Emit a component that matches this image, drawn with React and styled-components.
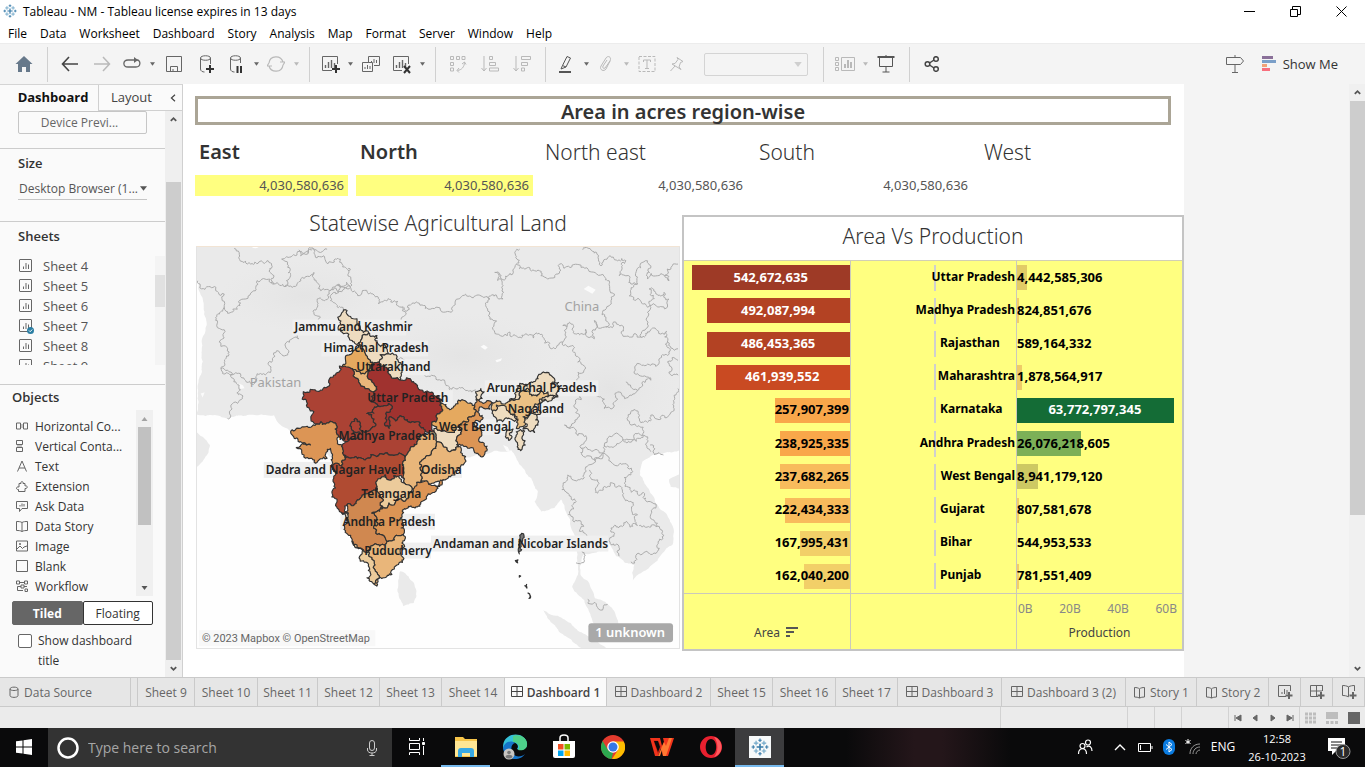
import React from "react";
import styled, { createGlobalStyle, css } from "styled-components";

const ui = '"Open Sans", "Noto Sans", sans-serif';
const viz = '"Noto Sans", "Open Sans", sans-serif';

const Global = createGlobalStyle`
  * { box-sizing: border-box; }
  html, body { margin: 0; padding: 0; }
  body { font-family: ${ui}; font-size: 12px; color: #333; background: #fff; }
  button, input, select { font-family: inherit; font-size: inherit; color: inherit; }
  button { border: 0; padding: 0; background: none; }
  h1, h2, p, ul { margin: 0; padding: 0; list-style: none; }
`;

/* ---------- shell ---------- */
const Shell = styled.div`
  display: flex;
  flex-direction: column;
  min-height: 100vh;
  overflow: hidden;
`;
const TitleBar = styled.header`
  display: flex;
  align-items: center;
  height: 22px;
  padding: 0 16px 0 3px;
  gap: 6px;
  color: #000;
  white-space: nowrap;
`;
const WindowControls = styled.div`
  display: flex;
  margin-left: auto;
  gap: 30px;
`;
const WindowButton = styled.button`
  display: grid;
  place-items: center;
  width: 16px;
  height: 16px;
`;
const MenuBar = styled.nav`
  display: flex;
  align-items: center;
  height: 21px;
  padding: 2px 0 0 8px;
  gap: 13px;
  color: #000;
`;
const ToolBar = styled.div`
  display: flex;
  align-items: center;
  height: 41px;
  background: #f4f4f4;
  border-top: 1px solid #ececec;
`;
const ToolButton = styled.button`
  display: grid;
  place-items: center;
  flex: none;
  width: ${(p) => p.$w || 32}px;
  height: 34px;
  color: ${(p) => (p.$off ? "#b9b9b9" : "#666")};
`;
const ToolRule = styled.div`
  flex: none;
  width: 1px;
  height: 35px;
  margin: 0 6px 0 ${(p) => (p.$flush ? 0 : 7)}px;
  background: #d0d0d0;
`;
const MarkSelect = styled.select`
  appearance: none;
  width: 104px;
  height: 23px;
  margin: 0 8px 0 12px;
  border: 1px solid #d4d4d4;
  border-radius: 2px;
  background: #f4f4f4;
`;
const SelectWrap = styled.label`
  display: grid;
  align-items: center;
  & > * { grid-area: 1 / 1; }
  & > svg { justify-self: end; margin-right: ${(p) => p.$inset}px; pointer-events: none; }
`;
const ShowMe = styled.button`
  display: flex;
  align-items: center;
  gap: 6px;
  margin: 0 27px 0 11px;
  font-size: 13px;
  color: #333;
`;
const Push = styled.div`
  margin-left: auto;
  display: flex;
  align-items: center;
`;

/* ---------- side pane ---------- */
const Work = styled.div`
  display: flex;
  flex: 1;
`;
const Side = styled.aside`
  display: flex;
  flex-direction: column;
  flex: none;
  width: 183px;
  background: #fafafa;
  border-top: 1px solid #d4d4d4;
  border-right: 1px solid #d0d0d0;
`;
const SideTabs = styled.div`
  display: flex;
  height: 26px;
  font-size: 13px;
`;
const SideTab = styled.button`
  width: ${(p) => p.$w}px;
  padding: 0 0 2px ${(p) => (p.$on ? 8 : 2)}px;
  font-weight: ${(p) => (p.$on ? 700 : 400)};
  color: ${(p) => (p.$on ? "#111" : "#444")};
  ${(p) => !p.$on && css`border-bottom: 1px solid #d0d0d0;`}
  ${(p) => p.$edge && css`border-left: 1px solid #d0d0d0;`}
`;
const SideBody = styled.div`
  display: flex;
  flex: 1;
`;
const SideContent = styled.div`
  width: 165px;
`;
const Section = styled.section`
  height: ${(p) => p.$h}px;
  padding-left: ${(p) => p.$x || 18}px;
  border-bottom: ${(p) => (p.$last ? 0 : 1)}px solid #ccc;
`;
const SectionTitle = styled.h2`
  font-size: 13px;
  line-height: ${(p) => (p.$tight ? 25 : 28)}px;
  font-weight: 600;
  color: #333;
`;
const PreviewButton = styled.button`
  width: 129px;
  height: 23px;
  border: 1px solid #c6c6c6;
  border-radius: 2px;
  padding-right: 6px;
  color: #666;
`;
const SizeSelect = styled.select`
  appearance: none;
  width: 129px;
  height: 23px;
  padding: 0 8px 0 1px;
  border: 0;
  border-bottom: 1px solid #c6c6c6;
  background: transparent;
  color: #555;
`;
const ListRow = styled.div`
  display: flex;
`;
const SheetList = styled.ul`
  flex: 1;
  height: 109px;
  overflow: hidden;
`;
const SheetItem = styled.li`
  display: flex;
  align-items: center;
  gap: 9px;
  height: 20px;
  font-size: 13px;
  color: #555;
`;
const ObjectList = styled.ul`
  width: 124px;
  padding: 6px 0 0 3px;
`;
const ObjectItem = styled.li`
  display: flex;
  align-items: center;
  gap: 6px;
  height: 20px;
  color: #333;
  white-space: nowrap;
  svg { color: #666; }
`;
const Track = styled.div`
  display: flex;
  flex-direction: column;
  align-items: center;
  flex: none;
  width: ${(p) => p.$w}px;
  background: ${(p) => p.$bg || "#f0f0f0"};
  color: #555;
`;
const TrackArrow = styled.button`
  display: grid;
  place-items: center;
  flex: none;
  width: 100%;
  height: 17px;
`;
const Thumb = styled.div`
  width: ${(p) => p.$w}px;
  ${(p) => (p.$grow ? `flex: ${p.$grow};` : `height: ${p.$h}px;`)}
  background: ${(p) => p.$c || "#cdcdcd"};
`;
const Gap = styled.div`
  flex: ${(p) => p.$grow || "none"};
  height: ${(p) => p.$h || 0}px;
`;
const Segmented = styled.div`
  display: flex;
  width: 141px;
  height: 24px;
  margin-top: 5px;
`;
const Segment = styled.button`
  flex: 1;
  border: 1px solid ${(p) => (p.$on ? "#666" : "#333")};
  border-radius: 2px;
  background: ${(p) => (p.$on ? "#666" : "#fff")};
  color: ${(p) => (p.$on ? "#fff" : "#333")};
  font-weight: ${(p) => (p.$on ? 700 : 400)};
`;
const CheckRow = styled.label`
  display: flex;
  gap: 6px;
  margin: 6px 0 0 6px;
  line-height: 20px;
  width: 128px;
  color: #333;
  input {
    appearance: none;
    flex: none;
    width: 14px;
    height: 14px;
    margin: 3px 0 0;
    border: 1px solid #666;
    border-radius: 2px;
    background: #fff;
  }
`;

/* ---------- dashboard ---------- */
const Canvas = styled.main`
  flex: 1;
  min-width: 0;
  padding: 12px 0 0 12px;
  font-family: ${viz};
  background: #fff;
`;
const Gutter = styled.div`
  flex: none;
  width: 165px;
  background: #f4f4f4;
`;
const Banner = styled.h1`
  height: 29px;
  margin-right: 13px;
  border: 3px solid #aba596;
  font-size: 20px;
  line-height: 25px;
  font-weight: 600;
  text-align: center;
  color: #333;
`;
const Kpis = styled.div`
  display: grid;
  grid-template-columns: 161fr 185fr 214fr 225fr 191fr;
  margin: 11px 13px 0 0;
`;
const KpiTitle = styled.h2`
  padding-left: 4px;
  font-size: ${(p) => (p.$on ? 20 : 21)}px;
  line-height: 32px;
  font-weight: ${(p) => (p.$on ? 600 : 300)};
  color: #333;
`;
const KpiValue = styled.div`
  height: 21px;
  margin: 7px 8px 0 0;
  padding-right: 4px;
  line-height: 21px;
  font-size: 13px;
  text-align: right;
  color: #555;
  background: ${(p) => (p.$on ? "#ffff80" : "none")};
`;
const Panels = styled.div`
  display: grid;
  grid-template-columns: 485fr 502fr;
  gap: 2px;
  margin-top: 10px;
`;
const MapPanel = styled.section`
  padding-left: 1px;
`;
const MapTitle = styled.h2`
  font-size: 21px;
  line-height: 34px;
  height: 40px;
  font-weight: 300;
  text-align: center;
  color: #333;
`;
const MapSvg = styled.svg`
  display: block;
  width: 100%;
  height: 403px;
  border: 1px solid #e3e3e3;
  border-top-color: #f2e4d4;
  font-family: ${viz};
`;
const Card = styled.section`
  display: flex;
  flex-direction: column;
  height: 436px;
  margin-top: 9px;
  border: 2px solid #c4c4c4;
`;
const CardTitle = styled.h2`
  flex: none;
  height: 43px;
  font-size: 21px;
  line-height: 39px;
  font-weight: 300;
  text-align: center;
  color: #333;
`;
const Chart = styled.div`
  flex: 1;
  display: grid;
  grid-template-columns: 1fr 1fr 1fr;
  background: #ffff80;
`;
const ChartColumn = styled.div`
  display: flex;
  flex-direction: column;
  min-width: 0;
  border-top: 1px solid #d2cfb4;
  border-left: ${(p) => (p.$first ? 0 : 1)}px solid #cbc9bb;
`;
const Plot = styled.div`
  display: flex;
  flex-direction: column;
  height: 333px;
  border-bottom: 1px solid #cbc9bb;
`;
const MarkRow = styled.div`
  flex: 1;
  display: grid;
  align-items: center;
  & > * { grid-area: 1 / 1; }
`;
const Bar = styled.div`
  display: grid;
  place-items: center;
  height: 25px;
  width: ${(p) => p.$pct}%;
  background: ${(p) => p.$c};
  justify-self: ${(p) => (p.$right ? "end" : "start")};
`;
const MarkText = styled.span`
  justify-self: ${(p) => p.$at || "center"};
  padding-left: ${(p) => p.$indent || 0}px;
  margin-right: 1px;
  font-size: ${(p) => (p.$name ? 12 : 13)}px;
  line-height: 16px;
  padding-bottom: 2px;
  font-weight: 700;
  white-space: nowrap;
  color: ${(p) => (p.$light ? "#fff" : "#000")};
`;
const Tick = styled.div`
  width: 2px;
  height: 26px;
  margin-left: 83px;
  background: #cfcfcf;
`;
const AxisScale = styled.div`
  display: flex;
  justify-content: space-between;
  padding: 6px 5px 0 1px;
  line-height: 18px;
  color: #888;
  height: 26px;
`;
const AxisName = styled.div`
  display: flex;
  justify-content: center;
  align-items: center;
  gap: 6px;
  height: 24px;
  padding-left: ${(p) => (p.$sorted ? 18 : 0)}px;
  color: #444;
`;

/* ---------- bottom tabs ---------- */
const TabStrip = styled.nav`
  display: flex;
  height: 30px;
  background: #e6e6e6;
  border-top: 1px solid #cacaca;
  border-bottom: 1px solid #cacaca;
`;
const SheetTab = styled.button`
  display: flex;
  align-items: center;
  justify-content: ${(p) => (p.$start ? "flex-start" : "center")};
  padding-left: ${(p) => (p.$start ? 8 : 0)}px;
  gap: 4px;
  flex: ${(p) => p.$w} 1 ${(p) => p.$w}px;
  min-width: 0;
  white-space: nowrap;
  border-right: 1px solid #cacaca;
  color: ${(p) => (p.$on ? "#444" : "#666")};
  background: ${(p) => (p.$on ? "#fafafa" : "transparent")};
  font-weight: ${(p) => (p.$on ? 600 : 400)};
`;
const StatusBar = styled.div`
  display: flex;
  justify-content: flex-end;
  height: 21px;
  background: #ebebeb;
`;
const StatusCell = styled.div`
  display: flex;
  align-items: center;
  justify-content: space-around;
  width: ${(p) => p.$w}px;
  border-left: 1px solid #d2d2d2;
  color: #666;
`;
const StatusButton = styled.button`
  display: grid;
  place-items: center;
  width: 14px;
  height: 16px;
`;

/* ---------- taskbar ---------- */
const TaskBar = styled.footer`
  display: flex;
  align-items: center;
  height: 39px;
  color: #fff;
  background: #0a0a0b linear-gradient(90deg, transparent 62%, #24161a 67%, #24161a 69%, transparent 74%);
`;
const TaskButton = styled.button`
  display: grid;
  place-items: center;
  flex: none;
  width: ${(p) => p.$w || 49}px;
  height: 39px;
  color: #fff;
  background: ${(p) => (p.$on ? "#3c3c3e" : "none")};
  border-bottom: 2px solid ${(p) => (p.$open ? "#76b9ed" : "transparent")};
`;
const Search = styled.label`
  display: flex;
  align-items: center;
  flex: none;
  width: 344px;
  height: 39px;
  padding: 0 12px 0 9px;
  gap: 9px;
  background: #333;
  input {
    flex: 1;
    min-width: 0;
    border: 0;
    padding: 0;
    background: none;
    font-size: 14px;
  }
  input::placeholder { color: #a6a6a6; opacity: 1; }
`;
const Tray = styled.div`
  display: flex;
  align-items: center;
  margin-left: auto;
`;
const Clock = styled.div`
  width: 72px;
  line-height: 18px;
  text-align: center;
  white-space: nowrap;
  font-size: 11px;
`;

/* ---------- icons ---------- */
const I = ({ s = 20, sw = 1, children, vb, ...r }) => (
  <svg width={s} height={s} viewBox={vb || `0 0 ${s} ${s}`} fill="none" stroke="currentColor" strokeWidth={sw} aria-hidden="true" {...r}>{children}</svg>
);
const Caret = ({ w = 6 }) => (
  <svg width={w} height="4" viewBox="0 0 6 4" aria-hidden="true"><path d="M0 0h6L3 4z" fill="currentColor" /></svg>
);
const Chevron = ({ d = "M2 6l3-3 3 3" }) => <I s={9} sw={2} vb="0 0 10 9"><path d={d} /></I>;
const plusAt = (x, y) => <path d={`M${x} ${y - 4}v8M${x - 4} ${y}h8`} strokeWidth="2" stroke="#333" />;
const bars = (x, y) => <path d={`M${x} ${y}v-3M${x + 3} ${y}v-6M${x + 6} ${y}v-8M${x + 9} ${y}v-5`} strokeWidth="1.4" />;

const TableauMark = ({ s, a = "#3579a8", b = "#6fa6c8" }) => (
  <svg width={s} height={s} viewBox="0 0 16 16" fill="none" aria-hidden="true">
    <path d="M8 5v6M5 8h6" stroke={a} strokeWidth="1.4" />
    <path d="M4.500 2.500v4M2.500 4.500h4M11.500 2.500v4M9.500 4.500h4M4.500 9.500v4M2.500 11.500h4M11.500 9.500v4M9.500 11.500h4" stroke={b} />
    <path d="M8 .5v3M6.500 2h3M8 12.500v3M6.500 14h3M2 6.500v3M.5 8h3M14 6.500v3M12.500 8h3" stroke={a} />
  </svg>
);
const SheetIcon = ({ done }) => (
  <I s={16}>
    <rect x="1.500" y="1.500" width="12" height="12" rx=".5" stroke="#666" />
    <path d="M5.500 11V8.500M8 11V5M10.500 11V6.500" stroke="#666" />
    {done && <><circle cx="12.500" cy="12.500" r="3.500" fill="#2b7ea3" stroke="none" /><path d="M11 12.500l1.200 1.200 2-2.200" stroke="#fff" /></>}
  </I>
);
const GridIcon = () => <I s={12}><path d="M.5.5h11v10H.5zM6 .5v10M.5 5.500h11" /></I>;
const BookIcon = () => <I s={13}><path d="M1.500 1.500c2 0 3.500.3 5 1.300 1.500-1 3-1.300 5-1.300v9.500c-2 0-3.500.3-5 1-1.500-.7-3-1-5-1zM6.500 3v9" /></I>;

/* ---------- map geometry ---------- */
const hash = (a, b) => {
  const v = Math.sin(a * 12.9898 + b * 78.233) * 43758.5453;
  return v - Math.floor(v) - 0.5;
};
// Splits a segment at displaced midpoints; neighbours that share an edge get the same wiggle.
const split = (p, q, amp) => {
  const len = Math.hypot(q[0] - p[0], q[1] - p[1]);
  if (len < 7) return [q];
  const mx = (p[0] + q[0]) / 2, my = (p[1] + q[1]) / 2;
  const sx = p[0] < q[0] || (p[0] === q[0] && p[1] < q[1]) ? 1 : -1;
  const k = hash(mx, my) * amp * sx;
  const m = [mx - (q[1] - p[1]) * k, my + (q[0] - p[0]) * k];
  return [...split(p, m, amp), ...split(m, q, amp)];
};
const trace = (src, amp = 0.4, close = false) => {
  const n = src.split(/[ ,]+/).map(Number);
  const pts = [];
  for (let i = 0; i < n.length; i += 2) pts.push([n[i], n[i + 1]]);
  if (close) pts.push(pts[0]);
  let out = [pts[0]];
  for (let i = 1; i < pts.length; i++) out = out.concat(split(pts[i - 1], pts[i], amp));
  return "M" + out.map((p) => p[0].toFixed(1) + " " + p[1].toFixed(1)).join("L") + (close ? "Z" : "");
};

const LAND = [
  "0,0 1460,0 1460,612 1435,622 1405,626 1372,632 1345,650 1337,690 1362,730 1390,780 1420,812 1438,850 1436,900 1402,930 1372,962 1342,985 1316,1008 1320,962 1292,955 1266,935 1250,905 1240,888 1230,918 1192,926 1168,930 1158,960 1158,990 1182,1012 1202,1062 1240,1080 1265,1115 1275,1152 1270,1188 1228,1166 1200,1140 1188,1110 1170,1068 1150,1050 1133,1028 1146,1000 1150,960 1146,900 1130,850 1114,800 1100,764 1080,790 1040,800 1020,770 1030,740 1010,700 985,670 965,640 950,616 930,620 870,626 800,640 740,700 600,780 450,760 410,640 360,600 285,560 262,545 245,530 235,510 150,512 95,520 60,510 0,507",
  "0,560 20,575 42,600 38,620 20,650 0,668",
  "1425,704 1460,688 1460,732 1430,726",
  "615,980 640,995 664,1040 656,1076 625,1086 612,1060 609,1010",
  "1045,1098 1090,1114 1140,1150 1200,1180 1240,1215 1170,1215 1120,1180 1080,1142",
];
const BORDERS = [
  "115,8 165,55 235,90 235,115", "5,105 60,125 85,145 85,185 65,230 70,290 100,320 75,370 130,420 140,460 105,480 95,520",
  "85,185 150,160 180,125 235,115 268,123 290,125 315,100 355,80 375,135 410,130 470,118 465,70 440,55 435,40 385,30 315,30 310,12",
  "268,123 285,90 275,55 258,40 290,30 320,22 352,8 375,20 395,10", "75,370 120,382 225,370 230,340 280,320 310,280 320,245 375,215 365,165 400,138 465,125 405,150 405,165 450,195",
  "465,125 520,145 550,175 620,185 620,215 600,245", "620,185 690,180 735,187 790,160 850,148 885,160 925,160 925,120 900,80 965,55 975,10",
  "965,55 1020,75 1085,85 1095,55 1160,65 1240,105 1260,150 1235,215 1230,245 1200,225 1210,245 1200,280 1135,255 1125,230 1105,240 1105,290 1070,310 900,260 885,200 885,160",
  "1105,290 1135,300 1150,350 1150,400 1140,440 1145,490 1110,540 1145,555 1160,600 1165,618 1225,625", "600,345 640,365 680,385 720,392 750,410 790,430 845,437",
  "1165,12 1220,60 1270,45 1295,45 1275,90 1310,115 1330,115 1360,185 1365,130 1410,140 1420,185 1360,200 1340,275 1310,275 1265,230 1235,245",
  "1330,115 1360,45 1370,60 1360,100 1390,90 1425,105 1452,55", "1340,275 1420,290 1452,310", "1420,290 1410,330 1370,360 1335,355 1330,385 1370,405 1330,435 1270,440 1260,480 1230,490 1205,450",
  "1295,410 1330,435", "1452,345 1420,350 1425,380 1452,390", "1452,430 1440,490 1370,510 1310,500 1310,540 1350,560 1340,580 1230,600 1225,625", "1230,600 1290,590 1320,580 1360,592 1370,620",
  "1105,725 1120,690 1175,680 1200,640 1225,625 1160,610", "1185,675 1210,705 1210,745 1280,725 1310,770 1330,810 1330,842 1250,850 1250,900 1275,935", "1390,845 1390,900 1370,930 1310,952",
  "1225,625 1260,660 1310,690 1290,698 1330,740 1385,790 1390,845 1335,843", "1105,725 1145,770 1130,815 1155,860 1165,910 1145,955", "1368,600 1382,630 1408,630", "1180,1065 1210,1090 1240,1080",
];
const P = "#eedcc0", T = "#e9b67a", D = "#dc9555", R = "#ab4234";
const STATES = [
  [P, "427,215 455,195 485,220 520,262 495,290 470,285 440,260 430,240"],
  [P, "495,290 520,262 545,270 570,300 580,325 555,328 552,350 535,355 510,325 490,292"],
  ["#e5a95f", "443,365 450,340 470,315 490,292 510,325 535,355 522,372 490,378 470,370"],
  [T, "470,370 490,378 522,372 535,355 530,375 538,420 545,432 535,440 515,430 490,405"],
  [P, "552,350 555,328 580,325 610,350 622,372 615,405 580,385 555,365"],
  ["#a0322f", "535,355 552,350 555,365 580,385 615,405 650,410 700,440 732,455 735,480 740,500 710,535 718,560 690,555 665,530 620,515 583,515 582,550 568,540 570,520 590,490 580,475 545,485 528,470 535,440 545,432 538,420 530,375"],
  [R, "440,365 470,370 490,405 515,430 535,440 528,470 545,485 515,505 530,548 505,560 495,535 480,520 470,530 470,555 495,565 455,590 430,575 425,545 390,537 362,537 355,500 333,470 320,462 345,432 380,435 400,405 415,390 432,362"],
  [R, "515,505 545,485 580,475 590,490 570,520 568,540 582,550 583,515 620,515 665,530 690,555 690,572 655,605 640,620 630,638 590,630 550,632 510,645 480,635 445,630 440,600 455,590 495,565 470,555 470,530 480,520 495,535 505,560 530,548"],
  [D, "285,560 310,550 330,545 362,537 390,537 425,545 430,575 440,600 445,630 450,640 440,665 425,655 415,665 405,610 395,640 360,655 330,640 302,608 345,600 318,592 296,580"],
  ["#b04b32", "445,630 480,635 510,645 550,632 590,630 630,638 625,690 630,715 610,695 570,690 545,725 500,755 455,780 455,805 432,800 425,770 415,700 412,660 425,655 440,665 450,640"],
  [T, "655,605 690,572 718,560 725,590 715,612 690,640 680,665 682,700 670,730 645,742 628,715 625,690 630,638 640,620"],
  [P, "718,560 725,545 790,545 800,560 785,580 790,605 745,605 725,590"],
  ["#e5a95f", "735,470 780,482 840,485 840,510 820,530 790,545 725,545 710,535 740,500 735,480"],
  [T, "725,590 745,605 790,605 812,635 805,660 780,690 745,705 715,715 670,730 682,700 680,665 690,640 715,612"],
  [D, "845,460 890,470 885,492 860,485 848,500 865,518 840,530 850,550 868,600 870,627 845,625 815,605 790,605 785,580 800,560 790,545 820,530 840,510 840,485"],
  [P, "842,440 858,430 868,440 862,460 845,460"],
  ["#ebc185", "892,472 945,468 1020,450 1060,440 1060,455 1040,470 1010,500 985,515 980,545 965,550 970,525 960,508 920,500 893,497"],
  [P, "893,500 960,506 970,522 950,522 900,515"],
  [P, "945,468 960,445 1010,410 1030,392 1065,388 1080,400 1070,415 1105,430 1090,455 1060,440 1020,450"],
  [P, "1015,490 1060,455 1090,452 1060,470 1030,480 1025,510 1010,505"],
  [P, "990,520 1025,508 1030,540 1020,562 985,552"],
  [P, "965,560 990,558 992,600 978,617 965,590"], [P, "935,560 955,552 952,575 942,586 932,575"],
  ["#eccb9b", "545,725 570,690 610,695 628,715 645,742 600,775 570,790 545,800"],
  ["#d08850", "545,725 545,800 530,805 535,850 560,870 575,890 545,900 520,922 490,910 470,890 455,830 455,780 500,755"],
  [D, "530,805 545,800 570,790 600,775 645,742 700,715 745,705 710,745 680,770 660,790 620,810 618,850 624,870 575,890 560,870 535,850"],
  [T, "545,900 575,890 624,870 615,920 610,960 590,990 565,1000 545,1025 537,1020 540,980 520,922"],
  ["#eccb9b", "470,890 490,910 520,922 540,980 537,1020 515,1000 495,950"],
  [P, "438,803 455,805 453,828"],
  ["#777", "981,866 984,882 979,902 981,915 974,928 971,920 976,895"], ["#444", "962,948 970,946 969,955"], ["#444", "990,1024 996,1020 997,1031"], ["#555", "1000,1046 1008,1056 1003,1062"], ["#555", "974,993 978,995 974,998"],
];
const LABELS = [
  [98, 81, "Jammu and Kashmir"], [127, 102, "Himachal Pradesh"], [160, 121, "Uttarakhand"], [171, 152, "Uttar Pradesh"], [291, 142, "Arunachal Pradesh"],
  [312, 163, "Nagaland"], [243, 181, "West Bengal"], [142, 190, "Madhya Pradesh"], [69, 224, "Dadra and Nagar Haveli"], [225, 224, "Odisha"], [165, 248, "Telangana"],
  [146, 276, "Andhra Pradesh"], [168, 305, "Puducherry"], [237, 298, "Andaman and Nicobar Islands"],
];

function IndiaMap() {
  return (
    <MapSvg viewBox="0 0 484 403" preserveAspectRatio="xMidYMid slice" role="img" aria-label="Statewise Agricultural Land">
      <defs>
        <radialGradient id="relief"><stop offset="0" stopColor="#dedede" stopOpacity=".5" /><stop offset="1" stopColor="#e4e4e4" stopOpacity="0" /></radialGradient>
      </defs>
      <rect width="484" height="403" fill="#fefefe" />
      <g transform="translate(-1 -1) scale(.33333)">
        {LAND.map((d) => <path key={d} d={trace(d, 0.2, true)} fill="#eaeaea" />)}
        <ellipse cx="330" cy="150" rx="260" ry="110" fill="url(#relief)" />
        <ellipse cx="800" cy="330" rx="300" ry="130" fill="url(#relief)" />
        <ellipse cx="1250" cy="430" rx="200" ry="150" fill="url(#relief)" />
        <path d="M1168 130l14-10 22 12-10 12zM857 304l10-6 12 8-8 7zM902 345l20-6-4 8-12 4zM130 415l12 6 4 8-12 2zM14 445l12-4-6 16zM925 600l14 6 8 16-12-4z" fill="#fbfbfb" />
        <g fill="none" stroke="#aaa" strokeWidth="3">
          {BORDERS.map((d) => <path key={d} d={trace(d, 0.8)} />)}
        </g>
      </g>
      {LABELS.map(([x, y, t]) => (
        <rect key={t} x={x - 2} y={y - 8} width={Math.round(t.length * 6.4) + 5} height="16" fill="#efefef" />
      ))}
      <g transform="translate(-1 -1) scale(.33333)" stroke="#333" strokeWidth="3.500" strokeLinejoin="round">
        {STATES.map(([c, d]) => <path key={d} d={trace(d, 0.7, true)} fill={c} />)}
      </g>
      <g fontSize="13" fill="#a3a3a3">
        <text x="53" y="141">Pakistan</text>
        <text x="369" y="64">China</text>
      </g>
      <g fontSize="12" fontWeight="600" fill="#222">
        {LABELS.map(([x, y, t]) => <text key={t} x={x} y={y + 4}>{t}</text>)}
      </g>
      <rect x="2" y="385" width="177" height="16" fill="#f8f8f8" />
      <text x="5" y="397" fontSize="11" fill="#666" fontFamily="Roboto, sans-serif">© 2023 Mapbox © OpenStreetMap</text>
      <rect x="393" y="378" width="85" height="19" rx="3" fill="#a9a9a9" />
      <text x="435" y="392" fontSize="13" fontWeight="600" fill="#fff" textAnchor="middle">1 unknown</text>
    </MapSvg>
  );
}

/* ---------- chart ---------- */
const ROWS = [
  ["Uttar Pradesh", "542,672,635", 95, "#9e3a26", "4,442,585,306", 6, "#e2cb66", true],
  ["Madhya Pradesh", "492,087,994", 86, "#b34223", "824,851,676", 1, "#f2cf68", true],
  ["Rajasthan", "486,453,365", 86, "#b34223", "589,164,332", 0, "#f2cf68"],
  ["Maharashtra", "461,939,552", 81, "#c94a22", "1,878,564,917", 3, "#efcc68", true],
  ["Karnataka", "257,907,399", 45, "#f9a74a", "63,772,797,345", 95, "#146c36"],
  ["Andhra Pradesh", "238,925,335", 42, "#f9a74a", "26,076,218,605", 39, "#7cb057", true],
  ["West Bengal", "237,682,265", 42, "#f8bb5c", "8,941,179,120", 13, "#cdc963", true],
  ["Gujarat", "222,434,333", 39, "#f8bb5c", "807,581,678", 1, "#f2cf68"],
  ["Bihar", "167,995,431", 30, "#f2cf68", "544,953,533", 0, "#f2cf68"],
  ["Punjab", "162,040,200", 28, "#f2cf68", "781,551,409", 1, "#f2cf68"],
];
function AreaChart() {
  return (
    <Chart>
      <ChartColumn $first>
        <Plot>
          {ROWS.map(([n, v, w, c]) => (
            <MarkRow key={n}>
              <Bar $pct={w} $c={c} $right>{w > 50 && <MarkText $light>{v}</MarkText>}</Bar>
              {w <= 50 && <MarkText $at="end">{v}</MarkText>}
            </MarkRow>
          ))}
        </Plot>
        <Gap $h={26} />
        <AxisName $sorted>Area
          <I s={12} stroke="#555" sw={2}><path d="M0 2h12M0 6h8M0 10h4" /></I>
        </AxisName>
      </ChartColumn>
      <ChartColumn>
        <Plot>
          {ROWS.map(([n, , , , , , , end]) => (
            <MarkRow key={n}><Tick /><MarkText $name $at={end ? "end" : "start"} $indent={end ? 0 : 89}>{n}</MarkText></MarkRow>
          ))}
        </Plot>
      </ChartColumn>
      <ChartColumn>
        <Plot>
          {ROWS.map(([n, , , , v, w, c]) => (
            <MarkRow key={n}>
              <Bar $pct={w} $c={c}>{w > 50 && <MarkText $light>{v}</MarkText>}</Bar>
              {w <= 50 && <MarkText $at="start">{v}</MarkText>}
            </MarkRow>
          ))}
        </Plot>
        <AxisScale><span>0B</span><span>20B</span><span>40B</span><span>60B</span></AxisScale>
        <AxisName>Production</AxisName>
      </ChartColumn>
    </Chart>
  );
}

/* ---------- data ---------- */
const MENUS = ["File", "Data", "Worksheet", "Dashboard", "Story", "Analysis", "Map", "Format", "Server", "Window", "Help"];
const OBJECTS = [
  ["Horizontal Co...", <g key="i"><path d="M4.500 4h3v4h-3z" fill="#c4c4c4" stroke="none" /><path d="M.5 3h4v6h-4zM7.500 3h4v6h-4z" /></g>],
  ["Vertical Conta...", <g key="i"><path d="M1 4.500h5v3H1z" fill="#c4c4c4" stroke="none" /><path d="M.5.5h6v4h-6zM.5 7.500h6v4h-6z" /></g>],
  ["Text", <path d="M1.500 11.500L6 1l4.500 10.500M3 8h6" key="i" />],
  ["Extension", <path d="M3 5V3.500h2C4 1 8 1 7 3.500h2V6c3-1 3 3 0 2.500v3H2.500V9.500C-.5 10 0 6 3 7z" key="i" />],
  ["Ask Data", <path d="M.5 1.500h11v7H6l-2.500 3v-3h-3zM4 6.500V5M6 6.500v-3M8 6.500V4" key="i" />],
  ["Data Story", <path d="M.5 1.500c2 0 4 0 5.500 1 1.500-1 3.500-1 5.500-1v9c-2 0-4 0-5.500 1-1.500-1-3.500-1-5.500-1zM6 2.500v9" key="i" />],
  ["Image", <path d="M.5 1h11v10H.5zM1 9l3-3 2.500 2.500L8 7l3-1M3.500 3.500h1v1h-1z" key="i" />],
  ["Blank", <path d="M.5.5h11v11H.5z" key="i" />],
  ["Workflow", <path d="M.5 1h3v3h-3zM8.500 1h3v3h-3zM3.500 2.500h5M5 5h3v3H5zM8 6.500h3M5 6.500H1.500v4M9 9h2.500v2.500H9zM1.500 10.500H7" key="i" />],
];
const TABS = [
  ["Sheet 9", 57], ["Sheet 10", 63], ["Sheet 11", 60], ["Sheet 12", 62], ["Sheet 13", 62], ["Sheet 14", 63], ["Dashboard 1", 102, "d", true], ["Dashboard 2", 104, "d"],
  ["Sheet 15", 62], ["Sheet 16", 63], ["Sheet 17", 62], ["Dashboard 3", 104, "d"], ["Dashboard 3 (2)", 124, "d"], ["Story 1", 71, "s"], ["Story 2", 72, "s"],
];

export default function App() {
  return (
    <Shell>
      <Global />
      <TitleBar>
        <TableauMark s={14} />
        <span>Tableau - NM - Tableau license expires in 13 days</span>
        <WindowControls>
          <WindowButton aria-label="Minimize"><I s={11}><path d="M0 5.500h11" /></I></WindowButton>
          <WindowButton aria-label="Restore"><I s={11}><path d="M.5 3.500h7v7h-7zM2.500 3V.5h8v8H8" /></I></WindowButton>
          <WindowButton aria-label="Close"><I s={11}><path d="M.5.5l10 10M10.500.5l-10 10" /></I></WindowButton>
        </WindowControls>
      </TitleBar>
      <MenuBar>{MENUS.map((m) => <button key={m}>{m}</button>)}</MenuBar>

      <ToolBar>
        <ToolButton $w={47} aria-label="Home"><I s={18} stroke="none" fill="#66788a"><path d="M9 1l8.500 8H15v8h-4v-5H7v5H3V9H.5z" /></I></ToolButton>
        <ToolRule $flush />
        <ToolButton aria-label="Undo"><I s={18} sw={1.6} stroke="#444"><path d="M1.500 9H17M8 2L1.500 9 8 16" /></I></ToolButton>
        <ToolButton $off aria-label="Redo"><I s={18} sw={1.500}><path d="M16.500 9H1M10 2l6.500 7L10 16" /></I></ToolButton>
        <ToolButton $w={28} aria-label="Replay"><I s={18} sw={1.300}><path d="M10 5H5C-.5 5-.5 12 5 12h8c5 0 5-7 1-7h-4" /><path d="M11 2v6l4-3z" fill="currentColor" stroke="none" /></I></ToolButton>
        <ToolButton $w={12} aria-label="Replay options"><Caret w={5} /></ToolButton>
        <ToolButton aria-label="Save"><I s={18}><path d="M1.500 1.500h15v15h-15zM5.500 16v-4.500h7V16M8 14v2" /></I></ToolButton>
        <ToolButton aria-label="New data source"><I s={20}><path d="M4.500 4c0-3 10-3 10 0s-10 3-10 0v11c0 2 2 3 4 3M14.500 4v6" />{plusAt(14, 15)}</I></ToolButton>
        <ToolButton $w={28} aria-label="Pause updates"><I s={20}><path d="M4.500 4c0-3 10-3 10 0s-10 3-10 0v11c0 2 2 3 4 3M14.500 4v5" /><path d="M11.500 12v7M15 12v7" strokeWidth="2" stroke="#333" /></I></ToolButton>
        <ToolButton $w={12} aria-label="Pause options"><Caret w={5} /></ToolButton>
        <ToolButton $w={28} $off aria-label="Refresh"><I s={18} sw={1.200}><path d="M2 8c1-8 12-8 14-1M16 10c-1 8-12 8-14 1M13 7h5l-2 3M5 11H0l2-3" /></I></ToolButton>
        <ToolButton $w={12} $off aria-label="Refresh options"><Caret w={5} /></ToolButton>
        <ToolRule />
        <ToolButton $w={28} aria-label="New worksheet"><I s={20}><path d="M17.500 10V2.500h-15v14H12" />{bars(5.5, 14)}{plusAt(16, 15)}</I></ToolButton>
        <ToolButton $w={12} aria-label="New options"><Caret w={5} /></ToolButton>
        <ToolButton $w={30} aria-label="Duplicate"><I s={18}><path d="M6.500 7V1.500h11v9H12M.500 7.500h10v9H.500zM3 14v-2M5.500 14v-4M8 14v-3M9.500 8V6M12 8V4M14.500 8V5" /></I></ToolButton>
        <ToolButton $w={30} aria-label="Clear sheet"><I s={20}><path d="M17.500 10V2.500h-15v14H11" />{bars(5.5, 14)}<path d="M13 12l6 7M19 12l-6 7" strokeWidth="2" stroke="#333" /></I></ToolButton>
        <ToolButton $w={12} aria-label="Clear options"><Caret w={5} /></ToolButton>
        <ToolRule />
        <ToolButton $w={32} $off aria-label="Swap rows and columns"><I s={18}><path d="M1.500 1.500h3v3h-3zM7.500 1.500h3v3h-3zM13 1.500h3v3h-3zM1.500 7.500h3v3h-3zM1.500 13h3v3h-3zM15.500 7c0 5-3 8-7 8.500M13 9l2.500-2L17 9.500M10 13l-2 2.500 2 2" /></I></ToolButton>
        <ToolButton $off aria-label="Sort ascending"><I s={18}><path d="M3 1v15M.5 13l2.500 3 2.500-3M8.500 1.500h3v3h-3zM8.500 7.500h6v3h-6zM8.500 13h9v3h-9z" /></I></ToolButton>
        <ToolButton $off aria-label="Sort descending"><I s={18}><path d="M3 1v15M.5 13l2.500 3 2.500-3M8.500 1.500h9v3h-9zM8.500 7.500h6v3h-6zM8.500 13h3v3h-3z" /></I></ToolButton>
        <ToolRule />
        <ToolButton $w={28} aria-label="Highlight"><I s={18} stroke="#555"><path d="M10 1.500l3.500 1.500-4.500 9-3.500-1.500zM5.500 10.500L4 14l5-2" /><path d="M2 17h12" strokeWidth="2" /></I></ToolButton>
        <ToolButton $w={12} aria-label="Highlight options"><Caret w={5} /></ToolButton>
        <ToolButton $w={28} $off aria-label="Group"><I s={18}><path d="M13 6l-4 8c-2 3-7 1-5-3l5-8c2-3 6-1 4 3l-5 7c-1 1-3 0-2-2l4-6" /></I></ToolButton>
        <ToolButton $w={12} $off aria-label="Group options"><Caret w={5} /></ToolButton>
        <ToolButton $w={30} $off aria-label="Show labels"><I s={18}><path d="M1 1.500h16v15H1z" strokeDasharray="3 1.500" /><path d="M5.500 7V5h7v2M9 5v8.500M7 13.500h4" /></I></ToolButton>
        <ToolButton $w={30} $off aria-label="Pin"><I s={16}><path d="M8 1.500l6 4-2.500 1L10 11l2 2.500L3 8l3-.5 3-4zM6 10l-4.500 5" /></I></ToolButton>
        <SelectWrap $inset={14}>
          <MarkSelect aria-label="Fit" />
          <svg width="8" height="5" viewBox="0 0 6 4"><path d="M0 0h6L3 4z" fill="#cfcfcf" /></svg>
        </SelectWrap>
        <ToolRule />
        <ToolButton $w={30} $off aria-label="Show cards"><I s={20}><path d="M.5 3.500h3v3h-3zM.5 8.500h3v3h-3zM.5 13.500h3v3h-3zM6.500 3.500h13v13h-13z" /><path d="M10 14v-4M13 14V6M16 14V8" strokeWidth="2" /></I></ToolButton>
        <ToolButton $w={10} $off aria-label="Card options"><Caret w={5} /></ToolButton>
        <ToolButton aria-label="Presentation"><I s={18} stroke="#555"><path d="M2.500 3v8.500h13V3M9 0v2M9 12v5M5.500 17h7" /><path d="M.5 2h17" strokeWidth="2" /></I></ToolButton>
        <ToolRule />
        <ToolButton aria-label="Share"><I s={16} sw={1.500} stroke="#444"><circle cx="3.500" cy="8" r="2.300" /><circle cx="12" cy="3" r="2.300" /><circle cx="12" cy="13" r="2.300" /><path d="M5.500 7L10 4M5.500 9l4.500 3" /></I></ToolButton>
        <Push>
          <ToolButton aria-label="Guide"><I s={20}><path d="M1.500 3.500h14l3 3.500-3 3.500h-14zM10 1v2.500M10 10.500V18M7 18.500h6" /></I></ToolButton>
          <ShowMe>
            <svg width="15" height="16" viewBox="0 0 15 16"><path fill="#8a7099" d="M0 0h11v3H0z" /><path fill="#7b9fc8" d="M0 4h14v3H0z" /><path fill="#f2a277" d="M0 8h5v3H0z" /><path fill="#f86f7d" d="M0 12h8v3H0z" /></svg>
            Show Me
          </ShowMe>
        </Push>
      </ToolBar>

      <Work>
        <Side>
          <SideTabs>
            <SideTab $w={98} $on>Dashboard</SideTab>
            <SideTab $w={64} $edge>Layout</SideTab>
            <SideTab $w={20} aria-label="Collapse"><I s={8} sw={1.500} vb="0 0 8 10"><path d="M6.500 1L2 5l4.500 4" /></I></SideTab>
          </SideTabs>
          <SideBody>
            <SideContent>
              <Section $h={38}><PreviewButton>Device Previ...</PreviewButton></Section>
              <Section $h={73}>
                <SectionTitle>Size</SectionTitle>
                <SelectWrap $inset={18}>
                  <SizeSelect aria-label="Size"><option>Desktop Browser (1...</option></SizeSelect>
                  <svg width="7" height="5" viewBox="0 0 6 4"><path d="M0 0h6L3 4z" fill="#555" /></svg>
                </SelectWrap>
              </Section>
              <Section $h={163}>
                <SectionTitle>Sheets</SectionTitle>
                <Gap $h={6} />
                <ListRow>
                  <SheetList>
                    {[4, 5, 6, 7, 8, 9].map((n) => <SheetItem key={n}><SheetIcon done={n === 7} />Sheet {n}</SheetItem>)}
                  </SheetList>
                  <Track $w={10} $bg="#f4f4f4"><Gap $h={19} /><Thumb $w={10} $h={32} $c="#e1e1e1" /></Track>
                </ListRow>
              </Section>
              <Section $x={12} $last>
                <SectionTitle $tight>Objects</SectionTitle>
                <ListRow>
                  <ObjectList>
                    {OBJECTS.map(([n, d]) => <ObjectItem key={n}><I s={14} vb="-1 -1 14 14">{d}</I>{n}</ObjectItem>)}
                  </ObjectList>
                  <Track $w={17}>
                    <TrackArrow aria-label="Scroll up"><svg width="7" height="4" viewBox="0 0 6 4"><path d="M0 4h6L3 0z" fill="#a3a3a3" /></svg></TrackArrow>
                    <Thumb $w={13} $h={98} $c="#c1c1c1" /><Gap $grow={1} />
                    <TrackArrow aria-label="Scroll down"><Caret w={7} /></TrackArrow>
                  </Track>
                </ListRow>
                <Segmented><Segment $on>Tiled</Segment><Segment>Floating</Segment></Segmented>
                <CheckRow><input type="checkbox" />Show dashboard title</CheckRow>
              </Section>
            </SideContent>
            <Track $w={17} $bg="#efefef">
              <TrackArrow aria-label="Scroll up"><Chevron /></TrackArrow>
              <Gap $h={54} /><Thumb $w={15} $grow={1} />
              <TrackArrow aria-label="Scroll down"><Chevron d="M2 3l3 3 3-3" /></TrackArrow>
            </Track>
          </SideBody>
        </Side>

        <Canvas>
          <Banner>Area in acres region-wise</Banner>
          <Kpis>
            {["East", "North", "North east", "South", "West"].map((n, i) => (
              <div key={n}>
                <KpiTitle $on={i < 2}>{n}</KpiTitle>
                {i < 4 && <KpiValue $on={i < 2}>4,030,580,636</KpiValue>}
              </div>
            ))}
          </Kpis>
          <Panels>
            <MapPanel><MapTitle>Statewise Agricultural Land</MapTitle><IndiaMap /></MapPanel>
            <Card><CardTitle>Area Vs Production</CardTitle><AreaChart /></Card>
          </Panels>
        </Canvas>
        <Gutter />
        <Track $w={16}>
          <TrackArrow aria-label="Scroll up"><Chevron /></TrackArrow>
          <Thumb $w={15} $grow={414} /><Gap $grow={145} />
          <TrackArrow aria-label="Scroll down"><Chevron d="M2 3l3 3 3-3" /></TrackArrow>
        </Track>
      </Work>

      <TabStrip>
        <SheetTab $w={131} $start><I s={12}><path d="M2 3c0-2.500 8-2.500 8 0v6.500c0 2.500-8 2.500-8 0zc0 2 8 2 8 0" /></I>Data Source</SheetTab>
        <SheetTab $w={7} aria-label="Scroll tabs" />
        {TABS.map(([n, w, k, on]) => (
          <SheetTab key={n} $w={w} $on={on}>{k === "d" && <GridIcon />}{k === "s" && <BookIcon />}{n}</SheetTab>
        ))}
        <SheetTab $w={32} aria-label="New worksheet"><I s={16}><path d="M13.500 7V1.500h-12v11H9M5 10V8M7.500 10V5M10 10V6" /><path d="M12 8v7M8.500 11.500h7" strokeWidth="2" /></I></SheetTab>
        <SheetTab $w={32} aria-label="New dashboard"><I s={16}><path d="M13.500 7V1.500h-12v11H9M7.500 2v10M2 7h11" /><path d="M12 8v7M8.500 11.500h7" strokeWidth="2" /></I></SheetTab>
        <SheetTab $w={32} aria-label="New story"><I s={16}><path d="M13.500 7V1.500c-2 0-4 .3-6 1.300-2-1-4-1.300-6-1.300v10c2 0 4 .3 6 1.300V3" /><path d="M12 8v7M8.500 11.500h7" strokeWidth="2" /></I></SheetTab>
      </TabStrip>
      <StatusBar>
        <StatusCell $w={127} /><StatusCell $w={27} /><StatusCell $w={27} /><StatusCell $w={47} />
        <StatusCell $w={71}>
          {["M1 1v6M7 1v6L2 4z", "M6 1v6L2 4z", "M2 1v6l4-3z", "M7 1v6M1 1v6l5-3z"].map((d, i) => (
            <StatusButton key={d} aria-label={["First", "Previous", "Next", "Last"][i]}><I s={8} fill="currentColor"><path d={d} /></I></StatusButton>
          ))}
        </StatusCell>
        <StatusCell $w={66}>
          <StatusButton aria-label="Sheet sorter"><I s={12} stroke="#bdbdbd" sw={3} strokeDasharray="3 1"><path d="M0 2h12M0 6h12M0 10h12" /></I></StatusButton>
          <StatusButton aria-label="Filmstrip"><I s={12} stroke="none" fill="#bdbdbd"><path d="M0 0h12v7H0zM0 9h3v3H0zM4.500 9h3v3h-3zM9 9h3v3H9z" /></I></StatusButton>
          <StatusButton aria-label="Tabs"><I s={12} stroke="none" fill="#666"><path d="M0 0h12v12H0z" /></I></StatusButton>
        </StatusCell>
      </StatusBar>

      <TaskBar>
        <TaskButton $w={48} aria-label="Start"><I s={16} stroke="none" fill="#fff"><path d="M0 2.300l6.500-.9v6.100H0zM7.500 1.200L16 0v7.500H7.500zM0 8.500h6.500v6.100L0 13.700zM7.500 8.500H16V16l-8.500-1.200z" /></I></TaskButton>
        <Search>
          <I s={22}><circle cx="11" cy="11" r="9.500" stroke="#fff" strokeWidth="2.500" /></I>
          <input placeholder="Type here to search" aria-label="Search" />
          <I s={16} stroke="#ccc"><rect x="5.500" y=".5" width="5" height="10" rx="2.500" /><path d="M3.500 8v2c0 4 9 4 9 0V8M8 13v2.500M5.500 15.500h5" /></I>
        </Search>
        <TaskButton aria-label="Task view"><I s={18} stroke="#fff"><path d="M1.500 0v2.500h10V0M1.500 5.500h10v6h-10zM1.500 17v-2.500h10V17M15.500 0v3M15.500 8v9" /><path d="M14.500 4.500h2v2h-2z" fill="#fff" /></I></TaskButton>
        <TaskButton $open aria-label="File Explorer"><I s={24} stroke="none"><path d="M1 2h8l2 2h12v18H1z" fill="#f7c54a" /><path d="M1 6h22v15H1z" fill="#ffe694" /><path d="M4 22v-6q0-3 3-3h10q3 0 3 3v6h-4v-4H8v4z" fill="#38a9e4" /></I></TaskButton>
        <TaskButton aria-label="Edge">
          <I s={26} stroke="none"><path d="M1 13C1-3 24-3 25 10c0 6-7 7-10 5 3-4-2-8-6-6-5 1-8 4-8 8z" fill="#35c1d8" /><path d="M11 2c9-3 15 4 14 9 0 4-4 6-9 5 3-4-1-8-5-8z" fill="#4ed08a" /><path d="M1 14c2-7 9-8 12-5-5 1-5 10 1 13 3 1 7 0 9-2-4 7-20 8-22-6z" fill="#1674c8" /><circle cx="7" cy="20" r="5.500" fill="#c9c6c2" /><circle cx="7" cy="18.500" r="1.800" fill="#777" /><path d="M3.500 23c0-3 7-3 7 0-2 2-5 2-7 0z" fill="#777" /></I>
        </TaskButton>
        <TaskButton aria-label="Store"><I s={26} stroke="none"><path d="M9 7V4c0-4 8-4 8 0v3" stroke="#fff" strokeWidth="1.500" /><path d="M2 7h22v15q0 2-2 2H4q-2 0-2-2z" fill="#fff" /><path d="M7 10h5.500v5.500H7z" fill="#f25022" /><path d="M13.500 10H19v5.500h-5.500z" fill="#7fba00" /><path d="M7 16.500h5.500V22H7z" fill="#00a4ef" /><path d="M13.500 16.500H19V22h-5.500z" fill="#ffb900" /></I></TaskButton>
        <TaskButton aria-label="Chrome"><I s={24} stroke="none"><circle cx="12" cy="12" r="12" fill="#e33b2e" /><path d="M1.600 6L7 15l5 3-1.500 6A12 12 0 0 1 1.600 6z" fill="#2da94f" /><path d="M12 6.500h10.700A12 12 0 0 1 11 24l6-9z" fill="#fdbd00" /><circle cx="12" cy="12" r="5.800" fill="#fff" /><circle cx="12" cy="12" r="4.500" fill="#3478e5" /></I></TaskButton>
        <TaskButton aria-label="WPS Office"><I s={24} stroke="none"><path d="M0 3h10l2 8 2-4-1-4h11l-6 18h-5l-2-8-3 8H5z" fill="#f2341c" /><path d="M8 21l6-14 2 4 3-8h3l-6 18h-3l-1-6-2 6z" fill="#ff7a32" /><path d="M3.500 5.500H8l3 6-3 8z" fill="#c92012" /><path d="M4 6l4 11 2-5-2-6z" fill="#0a0a0b" /></I></TaskButton>
        <TaskButton aria-label="Opera"><I s={24} stroke="none"><path fillRule="evenodd" d="M12 1a11 11 0 1 0 0 22 11 11 0 1 0 0-22zm0 3c7 0 7 16 0 16S5 4 12 4z" fill="#e8202f" /><path d="M15 2c9 2 11 16 0 20 5-5 4-16 0-20z" fill="#ff5a5f" /></I></TaskButton>
        <TaskButton $on $open aria-label="Tableau"><I s={24}><path d="M1 1h22v22H1z" fill="#f7f9fa" stroke="none" /><g transform="translate(3 3)"><TableauMark s={18} /></g></I></TaskButton>
        <Tray>
          <TaskButton $w={44} aria-label="People"><I s={16} sw={1.200}><circle cx="11" cy="3.500" r="2.500" /><circle cx="5.500" cy="7" r="2.500" /><path d="M1.500 15c0-7 8-7 8 0M9.500 8c3-2 5.500 0 5.500 4" /></I></TaskButton>
          <TaskButton $w={26} aria-label="Show hidden icons"><I s={12} sw={1.400}><path d="M1 9l5-5 5 5" /></I></TaskButton>
          <TaskButton $w={24} aria-label="Battery"><I s={16}><path d="M1.500 4.500h12v8h-12zM15 7v3M3.500 6v5" /></I></TaskButton>
          <TaskButton $w={24} aria-label="Bluetooth"><I s={18}><rect x="3" y="1" width="12" height="16" rx="6" fill="#0a7be0" stroke="none" /><path d="M6 6.500l6 5L9 14V4l3 2.500-6 5" stroke="#fff" /></I></TaskButton>
          <TaskButton $w={24} aria-label="Wi-Fi"><I s={16} stroke="#999"><path d="M5 15C5 9 9 5 15 5M8 15c0-4 3-7 7-7M11 15c0-2 2-4 4-4" /><path d="M3 0v5M.5 1.500l5 3M5.500 1.500l-5 3" stroke="#fff" /></I></TaskButton>
          <TaskButton $w={36}>ENG</TaskButton>
          <Clock>12:58<br />26-10-2023</Clock>
          <TaskButton $w={52} aria-label="Notifications"><I s={24}><path d="M1 3h17v13H9l-4 4v-4H1z" fill="#fff" stroke="none" /><path d="M4 7h11M4 10h11M4 13h7" stroke="#111" /><circle cx="16" cy="16.500" r="7" fill="#2a2a2a" stroke="#999" /><text x="16" y="21" fontSize="12" textAnchor="middle" fill="#fff" stroke="none">1</text></I></TaskButton>
        </Tray>
      </TaskBar>
    </Shell>
  );
}
